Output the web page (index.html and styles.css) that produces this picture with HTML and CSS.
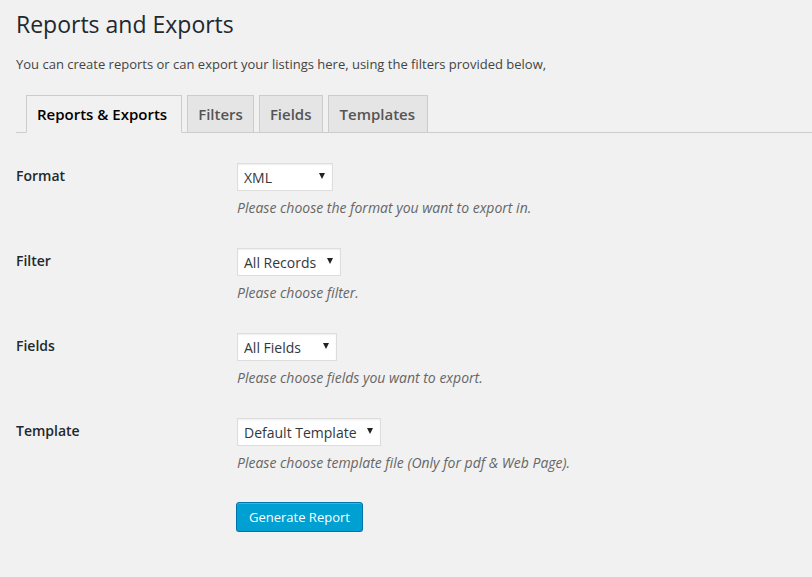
FILE: index.html
```html
<!DOCTYPE html>
<html>
<head>
<meta charset="utf-8">
<link rel="stylesheet" href="styles.css">
</head>
<body>
<div class="wrap">
  <h1 class="title">Reports and Exports</h1>
  <p class="intro">You can create reports or can export your listings here, using the filters provided below,</p>
  <nav class="tabs">
    <span class="tab tab-active">Reports &amp; Exports</span>
    <span class="tab">Filters</span>
    <span class="tab">Fields</span>
    <span class="tab tab-wide">Templates</span>
  </nav>
  <div class="form">
    <div class="row">
      <div class="label">Format</div>
      <div class="field">
        <div class="select w-xml"><span>XML</span><span class="arrow"></span></div>
        <p class="desc">Please choose the format you want to export in.</p>
      </div>
    </div>
    <div class="row">
      <div class="label">Filter</div>
      <div class="field">
        <div class="select w-records"><span>All Records</span><span class="arrow"></span></div>
        <p class="desc">Please choose filter.</p>
      </div>
    </div>
    <div class="row">
      <div class="label">Fields</div>
      <div class="field">
        <div class="select w-fields"><span>All Fields</span><span class="arrow"></span></div>
        <p class="desc">Please choose fields you want to export.</p>
      </div>
    </div>
    <div class="row">
      <div class="label">Template</div>
      <div class="field">
        <div class="select w-template"><span>Default Template</span><span class="arrow"></span></div>
        <p class="desc">Please choose template file (Only for pdf &amp; Web Page).</p>
      </div>
    </div>
    <div class="submit">
      <button class="button">Generate Report</button>
    </div>
  </div>
</div>
</body>
</html>
```
FILE: styles.css
```css
html, body {
  margin: 0;
  padding: 0;
  background: #f1f1f1;
}
body {
  font-family: "Open Sans", "Liberation Sans", sans-serif;
  font-size: 13px;
  color: #444;
}
.wrap {
  padding: 10px 0 0 16px;
}
.title {
  margin: 0;
  font-size: 23px;
  font-weight: 400;
  line-height: 29px;
  color: #23282d;
}
.intro {
  margin: 16px 0 0;
  line-height: 19.5px;
  color: #444;
}
.tabs {
  display: flex;
  align-items: flex-end;
  margin-top: 20px;
  padding-left: 10px;
  border-bottom: 1px solid #ccc;
}
.tab {
  display: block;
  margin-left: 5px;
  margin-bottom: -1px;
  padding: 6px 10px;
  font-size: 15px;
  font-weight: 600;
  line-height: 24px;
  color: #555;
  background: #e5e5e5;
  border: 1px solid #ccc;
  border-bottom: 1px solid #ccc;
}
.tab:first-child {
  margin-left: 0;
  padding: 6px 14px 6px 10px;
}
.tab-wide {
  padding: 6px 12px 6px 11px;
}
.tab-active {
  color: #000;
  background: #f1f1f1;
  border-bottom-color: #f1f1f1;
}
.form {
  padding-top: 15px;
}
.row {
  display: grid;
  grid-template-columns: 221px 1fr;
  height: 85px;
}
.label {
  padding-top: 19px;
  font-size: 14px;
  font-weight: 600;
  line-height: 18px;
  color: #23282d;
}
.field {
  padding-top: 15px;
}
.select {
  box-sizing: border-box;
  height: 28px;
  display: flex;
  align-items: center;
  justify-content: space-between;
  padding: 1px 7px 0 6px;
  background: #fff;
  border: 1px solid #ddd;
  box-shadow: inset 0 1px 2px rgba(0,0,0,.07);
  font-size: 14px;
  color: #32373c;
}
.arrow {
  width: 0;
  height: 0;
  border-left: 3px solid transparent;
  border-right: 3px solid transparent;
  border-top: 6px solid #222;
  margin-top: -2px;
}
.w-xml { width: 96px; }
.w-records { width: 104px; }
.w-fields { width: 100px; }
.w-template { width: 144px; }
.desc {
  margin: 6px 0 0;
  font-size: 14px;
  font-style: italic;
  line-height: 21px;
  color: #666;
}
.submit {
  padding: 14px 0 0 220px;
}
.button {
  box-sizing: border-box;
  height: 30px;
  padding: 0 12px;
  font-family: "Open Sans", "Liberation Sans", sans-serif;
  font-size: 13px;
  line-height: 28px;
  color: #fff;
  background: #00a0d2;
  border: 1px solid #0073aa;
  border-radius: 3px;
  box-shadow: inset 0 1px 0 rgba(120,200,230,.5), 0 1px 0 rgba(0,0,0,.15);
  cursor: pointer;
}
```
